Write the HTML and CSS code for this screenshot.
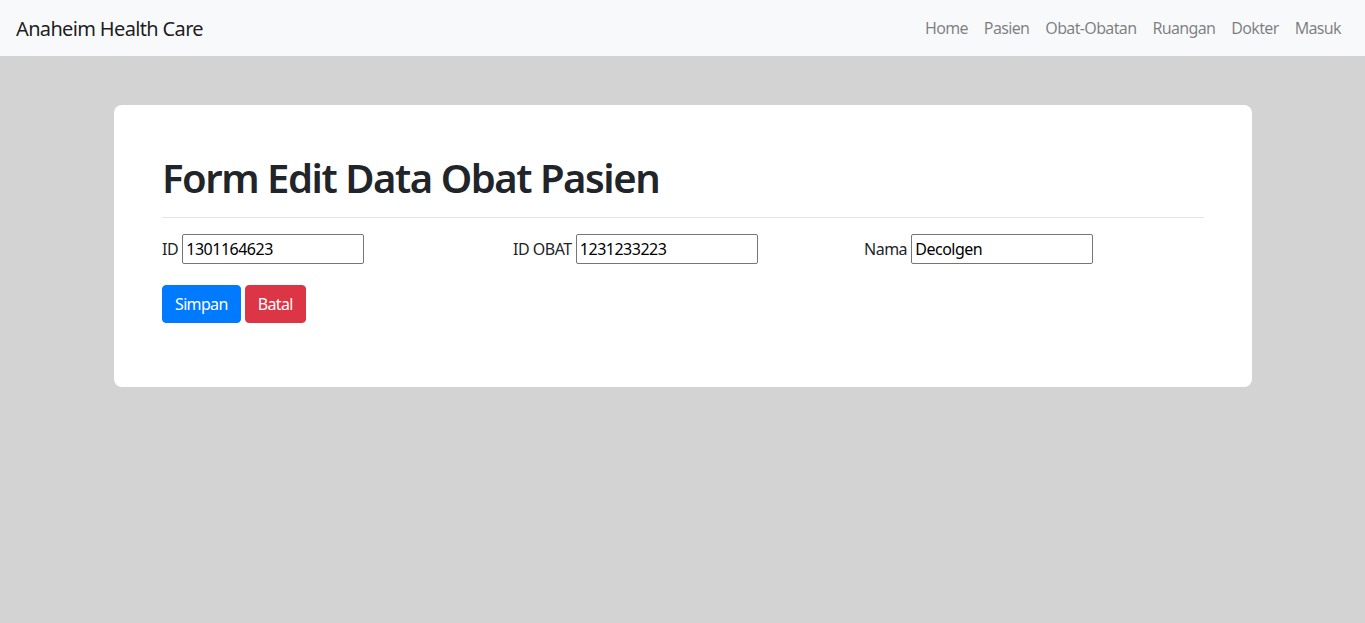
FILE: index.html
```html
<!DOCTYPE html>
<html lang="id">
<head>
<meta charset="utf-8">
<title>Anaheim Health Care</title>
<link rel="stylesheet" href="styles.css">
</head>
<body>
<nav class="navbar">
  <a class="brand" href="#">Anaheim Health Care</a>
  <ul class="nav">
    <li><a href="#">Home</a></li>
    <li><a href="#">Pasien</a></li>
    <li><a href="#">Obat-Obatan</a></li>
    <li><a href="#">Ruangan</a></li>
    <li><a href="#">Dokter</a></li>
    <li><a href="#">Masuk</a></li>
  </ul>
</nav>
<main class="jumbotron">
  <h1 class="title">Form Edit Data Obat Pasien</h1>
  <hr class="divider">
  <form class="form">
    <div class="row">
      <div class="col"><label>ID</label> <input type="text" value="1301164623"></div>
      <div class="col"><label>ID OBAT</label> <input type="text" value="1231233223"></div>
      <div class="col"><label>Nama</label> <input type="text" value="Decolgen"></div>
    </div>
    <div class="actions">
      <button type="button" class="btn btn-primary">Simpan</button>
      <button type="button" class="btn btn-danger">Batal</button>
    </div>
  </form>
</main>
</body>
</html>
```
FILE: styles.css
```css
* { box-sizing: border-box; }
html, body { margin: 0; padding: 0; }
body {
  background: #d3d3d3;
  font-family: "Noto Sans", "Open Sans", sans-serif;
  font-size: 16px;
  color: #212529;
  min-height: 623px;
}
.navbar {
  height: 56px;
  background: #f8f9fa;
  display: flex;
  align-items: center;
  justify-content: space-between;
  padding: 0 16px;
}
.brand {
  font-size: 20px;
  color: rgba(0,0,0,.9);
  text-decoration: none;
  letter-spacing: -0.65px;
}
.nav {
  list-style: none;
  display: flex;
  margin: 0;
  padding: 0;
}
.nav a {
  display: block;
  padding: 8px 8px;
  color: rgba(0,0,0,.5);
  text-decoration: none;
  font-size: 16px;
  letter-spacing: -0.65px;
}
.jumbotron {
  width: 1138px;
  margin: 49px 0 0 114px;
  background: #fff;
  border-radius: 8px;
  padding: 49px 48px 64px 48px;
}
.title {
  margin: 0;
  font-size: 40px;
  line-height: 48px;
  font-weight: 600;
  letter-spacing: -1.45px;
}
.divider {
  margin: 15px 0 16px;
  border: 0;
  border-top: 1px solid rgba(0,0,0,.1);
}
.row {
  display: grid;
  grid-template-columns: 351px 351px 1fr;
  align-items: center;
}
.col label { letter-spacing: -0.5px; }
.col input {
  width: 182px;
  height: 30px;
  border: 1px solid #767676;
  border-radius: 2px;
  font: inherit;
  font-size: 16px;
  padding: 0 3px;
  color: #000;
  letter-spacing: -0.5px;
}
.actions {
  margin-top: 21px;
  display: flex;
  gap: 4px;
}
.btn {
  font: inherit;
  font-size: 16px;
  line-height: 24px;
  padding: 6px 12px;
  border: 1px solid transparent;
  border-radius: 4px;
  color: #fff;
  letter-spacing: -0.65px;
}
.btn-primary { background: #007bff; border-color: #007bff; }
.btn-danger { background: #dc3545; border-color: #dc3545; }
```
